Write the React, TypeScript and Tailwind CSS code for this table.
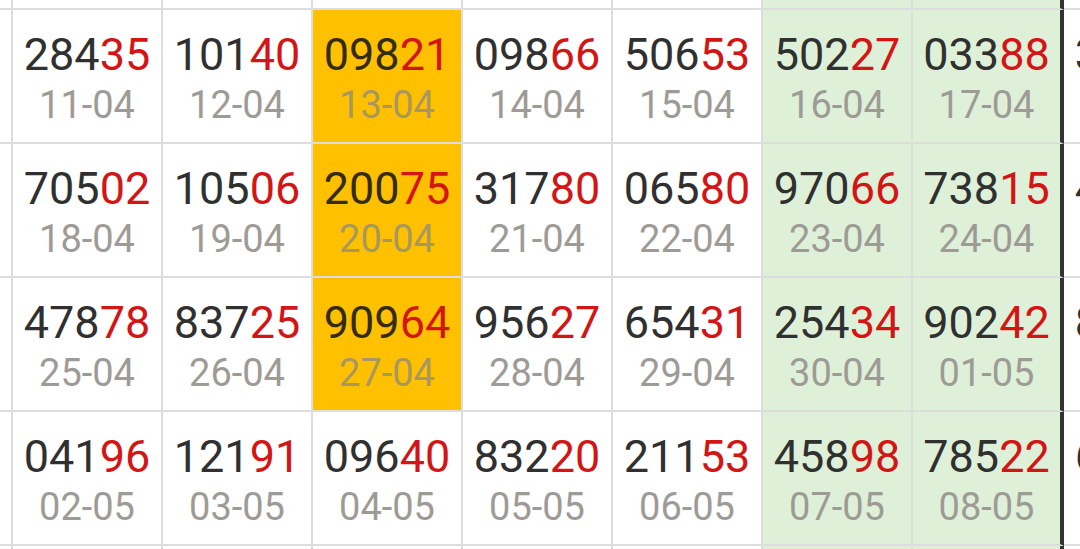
import React from 'react'

interface Cell {
  num: string
  date: string
  hot?: boolean
}

const ROWS: Cell[][] = [
  [
    { num: '28435', date: '11-04' },
    { num: '10140', date: '12-04' },
    { num: '09821', date: '13-04', hot: true },
    { num: '09866', date: '14-04' },
    { num: '50653', date: '15-04' },
    { num: '50227', date: '16-04' },
    { num: '03388', date: '17-04' },
    { num: '36214', date: '11-04' },
  ],
  [
    { num: '70502', date: '18-04' },
    { num: '10506', date: '19-04' },
    { num: '20075', date: '20-04', hot: true },
    { num: '31780', date: '21-04' },
    { num: '06580', date: '22-04' },
    { num: '97066', date: '23-04' },
    { num: '73815', date: '24-04' },
    { num: '41957', date: '18-04' },
  ],
  [
    { num: '47878', date: '25-04' },
    { num: '83725', date: '26-04' },
    { num: '90964', date: '27-04', hot: true },
    { num: '95627', date: '28-04' },
    { num: '65431', date: '29-04' },
    { num: '25434', date: '30-04' },
    { num: '90242', date: '01-05' },
    { num: '85106', date: '25-04' },
  ],
  [
    { num: '04196', date: '02-05' },
    { num: '12191', date: '03-05' },
    { num: '09640', date: '04-05' },
    { num: '83220', date: '05-05' },
    { num: '21153', date: '06-05' },
    { num: '45898', date: '07-05' },
    { num: '78522', date: '08-05' },
    { num: '60473', date: '02-05' },
  ],
]

// column widths + backgrounds (index 0..7 after the lead sliver)
function colClass(i: number, hot = false) {
  const base = 'shrink-0 border-b-2 border-[#dddddd]'
  if (i === 6) return `${base} w-[151px] bg-[#dff0d8] border-r-4 border-r-[#333333]`
  if (i === 5) return `${base} w-[150px] bg-[#dff0d8] border-r-2`
  if (hot) return `${base} w-[150px] bg-[#ffc000] border-r-2`
  return `${base} w-[150px] bg-white border-r-2`
}

function StripRow({ h }: { h: string }) {
  return (
    <div className={`flex ${h}`}>
      <div className="shrink-0 w-[13px] border-r-2 border-b-2 border-[#dddddd] bg-white" />
      {Array.from({ length: 8 }).map((_, i) => (
        <div key={i} className={colClass(i)} />
      ))}
    </div>
  )
}

export default function App() {
  return (
    <div
      className="w-[1080px] h-[549px] overflow-hidden bg-white"
      style={{ fontFamily: 'Roboto, "Noto Sans", sans-serif' }}
    >
      <div className="flex flex-col w-max">
        <StripRow h="h-[10px]" />
        {ROWS.map((row, r) => (
          <div key={r} className="flex h-[134px]">
            <div className="shrink-0 w-[13px] border-r-2 border-b-2 border-[#dddddd] bg-white" />
            {row.map((c, i) => (
              <div key={i} className={`${colClass(i, c.hot)} flex flex-col items-center pt-[22px]`}>
                <div className="text-[45px] leading-[45px]">
                  <span className={c.hot ? 'text-[#332c12]' : 'text-[#303030]'}>{c.num.slice(0, 3)}</span>
                  <span className="text-[#d31515]">{c.num.slice(3)}</span>
                </div>
                <div
                  className={`mt-[9px] text-[38px] leading-[38px] ${c.hot ? 'text-[#a8975f]' : 'text-[#9e9b97]'}`}
                >
                  {c.date}
                </div>
              </div>
            ))}
          </div>
        ))}
        <StripRow h="h-[10px]" />
      </div>
    </div>
  )
}
